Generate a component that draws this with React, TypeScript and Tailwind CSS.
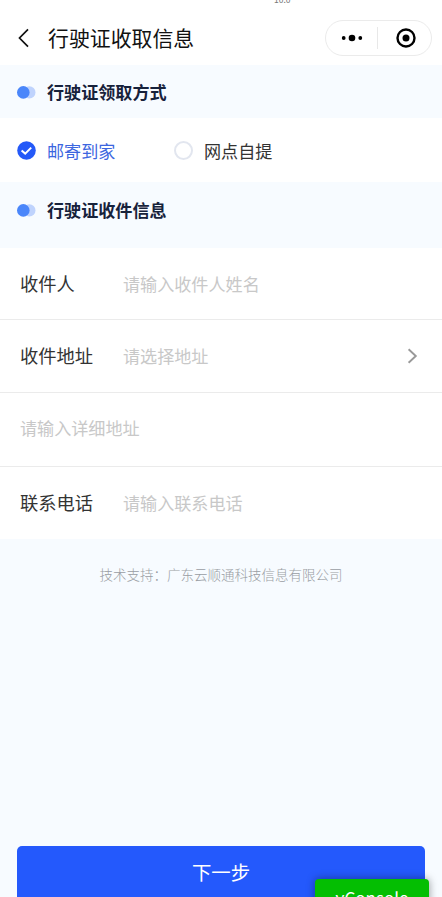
import type { ReactNode } from 'react'

function SectionTitle({ children, className }: { children: ReactNode; className: string }) {
  return (
    <div className={`flex items-start pl-[17px] ${className}`}>
      <svg className="mt-[5px] h-[13px] w-[19px]" viewBox="0 0 19 13">
        <circle cx="12.3" cy="6.4" r="6.2" fill="#bfd3fd" />
        <circle cx="6.3" cy="6.4" r="6.3" fill="#4a86fa" />
      </svg>
      <h2 className="ml-[11px] text-[17.1px] leading-[22px] font-bold text-[#17223b]">{children}</h2>
    </div>
  )
}

type FieldProps = {
  label?: string
  placeholder: string
  className: string
  arrow?: boolean
}

function Field({ label, placeholder, className, arrow }: FieldProps) {
  return (
    <div className={`flex items-center pr-[24px] pl-[20px] ${className}`}>
      {label && <span className="w-[103px] text-[18.3px] text-[#333]">{label}</span>}
      <span className="flex-1 text-[17.1px] text-[#c8c8c8]">{placeholder}</span>
      {arrow && (
        <svg className="h-[16px] w-[11px]" viewBox="0 0 11 16" fill="none" stroke="#999" strokeWidth="1.9">
          <path d="M1.6 1.2L8.8 8L1.6 14.8" />
        </svg>
      )}
    </div>
  )
}

function Header() {
  return (
    <header className="h-[65px] overflow-hidden bg-white">
      <div className="flex h-[3px] items-end pl-[274px]">
        <span className="text-[8.5px] leading-[8px] text-[#777]">10.0</span>
      </div>
      <div className="flex h-[62px] items-start pr-[10px] pl-[17px]">
        <svg className="mt-[25px] h-[20px] w-[13px]" viewBox="0 0 13 20" fill="none" stroke="#111" strokeWidth="1.7">
          <path d="M11 1.3L2.5 10L11 18.7" />
        </svg>
        <h1 className="mt-[20px] ml-[18px] flex-1 text-[20.9px] leading-[28px] text-[#111]">行驶证收取信息</h1>
        <div className="mt-[17px] flex h-[36px] w-[107px] items-center rounded-full border border-[#ebebeb]">
          <div className="flex flex-1 justify-center">
            <svg className="h-[8px] w-[22px]" viewBox="0 0 22 8">
              <circle cx="2.7" cy="4" r="1.9" />
              <circle cx="11" cy="4" r="3.3" />
              <circle cx="19.3" cy="4" r="1.9" />
            </svg>
          </div>
          <div className="h-[22px] w-px bg-[#e8e8e8]" />
          <div className="flex flex-1 justify-center pl-[2px]">
            <svg className="h-[20px] w-[20px]" viewBox="0 0 20 20">
              <circle cx="10" cy="10" r="8.5" fill="none" stroke="#000" strokeWidth="2.4" />
              <circle cx="10" cy="10" r="3.5" />
            </svg>
          </div>
        </div>
      </div>
    </header>
  )
}

export default function App() {
  return (
    <div className="flex h-[897px] w-[442px] flex-col overflow-hidden bg-[#f7fbff] font-['Noto_Sans_CJK_SC',sans-serif]">
      <Header />
      <SectionTitle className="h-[53px] pt-[16px]">行驶证领取方式</SectionTitle>
      <div className="flex h-[64px] items-center bg-white pt-[2px] pl-[17px] text-[17.1px]">
        <div className="flex w-[157px] items-center text-[#3c66df]">
          <svg className="mr-[11px] h-[19px] w-[19px]" viewBox="0 0 19 19">
            <circle cx="9.5" cy="9.5" r="9.3" fill="#2459f8" />
            <path d="M4.6 9.4L8.2 12.6L14.2 6.6" fill="none" stroke="#fff" strokeWidth="2" />
          </svg>
          邮寄到家
        </div>
        <div className="flex items-center text-[#333]">
          <span className="mr-[11px] h-[19px] w-[19px] rounded-full border-2 border-[#e2e6ef]" />
          网点自提
        </div>
      </div>
      <SectionTitle className="h-[66px] pt-[17px]">行驶证收件信息</SectionTitle>
      <div className="bg-white">
        <Field className="h-[72px] border-b border-[#ebebeb]" label="收件人" placeholder="请输入收件人姓名" />
        <Field className="h-[73px] border-b border-[#ebebeb]" label="收件地址" placeholder="请选择地址" arrow />
        <Field className="h-[74px] border-b border-[#ebebeb] pb-[4px]" placeholder="请输入详细地址" />
        <Field className="h-[72px]" label="联系电话" placeholder="请输入联系电话" />
      </div>
      <p className="mt-[25px] text-center text-[13.5px] leading-[20px] font-light text-[#999da3]">
        技术支持：广东云顺通科技信息有限公司
      </p>
      <div className="relative mx-[17px] mt-auto h-[51px] rounded-t-[5px] bg-[#2459fc]">
        <div className="pt-[12px] text-center text-[19.4px] leading-[28px] text-white">下一步</div>
        <div className="absolute top-[33px] -right-[4px] h-[40px] w-[114px] rounded-[4px] bg-[#04be02] pt-[7px] text-center text-[17px] leading-[24px] text-white shadow-[0_0_9px_rgba(0,0,0,0.4)]">
          vConsole
        </div>
      </div>
    </div>
  )
}
